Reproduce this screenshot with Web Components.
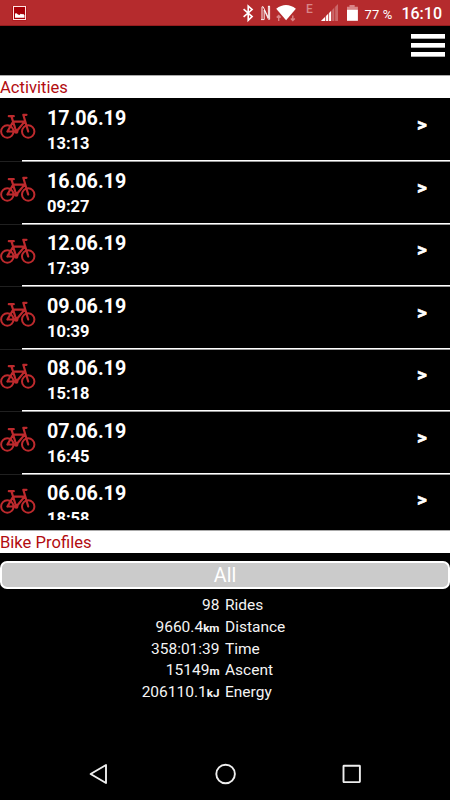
<!DOCTYPE html>
<html lang="en"><head><meta charset="utf-8"><title>Activities</title>
<style>html,body{margin:0;background:#000}body{width:450px;height:800px;overflow:hidden;font-family:Roboto,"Liberation Sans",sans-serif}</style></head>
<body><ride-app></ride-app>
<script>
const define=(name,render)=>customElements.define(name,class extends HTMLElement{
  connectedCallback(){
    if(this.shadowRoot)return;
    const t=document.createElement('template');
    t.innerHTML=render(this);
    this.attachShadow({mode:'open'}).append(t.content.cloneNode(true));
  }
});

define('status-bar',()=>`<style>
:host{display:flex;box-sizing:border-box;height:26px;background:#b52b2d;color:#fff;border-bottom:1px solid #961c1e;padding-right:8px;align-items:center}
svg{display:block;flex:none}
span{white-space:nowrap;line-height:26px;height:25px}
.pct{font-size:13px;letter-spacing:.15px;width:38px;padding:2px 0 0 1px;box-sizing:border-box;margin-right:1px}
.clock{font-size:16px;font-weight:500;padding-top:2px}
.net{font-size:12px;font-weight:500;color:#d98587;width:15px;line-height:18px}
</style>
<svg width="240" height="26" viewBox="0 0 240 26"><rect x="12.4" y="6" width="14" height="14.4" fill="#a80008"/><rect x="13.5" y="6.5" width="12" height="13" fill="none" stroke="#ffe2e2" stroke-width="1"/><path d="M15 17.8v-4.3l1.5-.3 1.5 1.3 1.5.5 1.2-1.2 1.3.4 1.3-.2 1.2 1.3v2.5z" fill="#fff"/></svg>
<svg width="66" height="26" viewBox="240 0 66 26"><path d="M243.6 9.2l8.5 7.4-3.9 3.7V6l3.9 3.6-8.5 7.3" fill="none" stroke="#fff" stroke-width="1.6"/>
<path d="M262 19.8V6.8h1.2l5.2 11V6M264.2 19.6V10l4.3 9.3h1.1V6.2M261 19.6h3.1M268 6.3h2" fill="none" stroke="#fff" stroke-width=".9"/>
<path d="M276.2 8.7Q286 1.2 295.9 8.7L286.1 20.2Z" fill="#fff"/><path d="M278.7 21v-5M276.7 17.6l2-2 2 2M292.8 15.5v5M290.8 18.5l2 2 2-2" fill="none" stroke="#d98587" stroke-width="1.4"/></svg>
<span class="net">E</span>
<svg width="43" height="26" viewBox="321 0 43 26"><path d="M321 21L338 4v17z" fill="#cb6769"/><path d="M321 21L331.3 10.7V21z" fill="#fff"/><path d="M325.6 15v6M328.6 12v9M331.7 9v12M334.7 7v14" stroke="#b52b2d" stroke-width=".8"/><path d="M347 10V6.8h2.5V5h5.2v1.8h3.2V10z" fill="#d98587"/><path d="M347 9.8h10.9v11H347z" fill="#fff"/></svg>
<span class="pct">77 %</span><span class="clock">16:10</span>`);

define('menu-bar',()=>`<style>:host{display:flex;box-sizing:border-box;height:49px;justify-content:flex-end;padding:8px 5px 0 0}
div{display:flex;flex-direction:column;gap:4px;width:34px}i{display:block;height:5px;background:#fff;box-sizing:border-box;border-bottom:1px solid #aaa}</style><div><i></i><i></i><i></i></div>`);

define('section-header',()=>`<style>:host{display:block;box-sizing:border-box;height:23px;background:#fff;border-top:1px solid #aaa;color:#b20c10;font-size:16.6px;line-height:23px;white-space:nowrap}</style><slot></slot>`);

define('bike-icon',()=>`<style>:host{display:block;width:36px;height:26px}svg{display:block}</style>
<svg width="36" height="26" viewBox="0 0 36 26" fill="none" stroke="#bd2a2d" stroke-width="2" stroke-linecap="round" stroke-linejoin="round"><circle cx="7.3" cy="18.5" r="6.2"/><circle cx="28.2" cy="18.5" r="6.2"/><path d="M7.4 18.5l5.8-9.9h11.4L16.4 18.5H7.4M8.8 3.2h5M11.5 3.6l4.7 14.9M28.2 18.5L23.3 1.8h3.2" stroke-width="2.2"/><circle cx="16.2" cy="18.5" r="1.3"/></svg>`);

define('activity-row',el=>`<style>
:host{display:grid;grid-template-columns:47px 1fr 34px;height:62.5px;color:#fff;position:relative;box-sizing:border-box;font-weight:700}
bike-icon{margin-top:15px}
.copy{padding-top:9px}.date{font-size:19.7px;line-height:23px}.time{font-size:16.5px;line-height:20px;margin-top:4.2px}
.go{font-size:19px;line-height:20px;padding-top:17px;margin-left:1px;-webkit-text-stroke:.6px #fff}
:host::after{content:"";position:absolute;left:22px;right:0;bottom:-1.5px;height:2px;background:linear-gradient(#fff 50%,#999 50%)}
:host::before{content:"";position:absolute;left:0;width:22px;bottom:-1.5px;height:1px;background:#202020}
</style><bike-icon></bike-icon><div class="copy"><div class="date">${el.getAttribute('date')}</div><div class="time">${el.getAttribute('time')}</div></div><div class="go">&gt;</div>`);

define('activity-list',()=>`<style>:host{display:block;height:422px;overflow:hidden;margin-bottom:10px}</style>
${[['17.06.19','13:13'],['16.06.19','09:27'],['12.06.19','17:39'],['09.06.19','10:39'],['08.06.19','15:18'],['07.06.19','16:45'],['06.06.19','18:58']].map(([d,t])=>`<activity-row date="${d}" time="${t}"></activity-row>`).join('')}`);

define('profile-button',()=>`<style>:host{display:block;box-sizing:border-box;height:28px;margin-top:7.5px;border:2px solid #fff;border-radius:7px;background:#cbcbcb;color:#fff;font-size:19.6px;line-height:26px;text-align:center}</style><slot></slot>`);

define('stat-row',el=>`<style>:host{display:grid;grid-template-columns:219.5px 1fr;gap:5.5px;height:21.9px;color:#f4f4f4;font-size:15.5px;line-height:22px;white-space:nowrap}
.v{text-align:right}b{font-size:11.7px}</style><div class="v">${el.getAttribute('value')}<b>${el.getAttribute('unit')||''}</b></div><div><slot></slot></div>`);

define('ride-stats',()=>`<style>:host{display:block;padding-top:5.3px;flex:1}</style>
<stat-row value="98">Rides</stat-row><stat-row value="9660.4" unit="km">Distance</stat-row><stat-row value="358:01:39">Time</stat-row><stat-row value="15149" unit="m">Ascent</stat-row><stat-row value="206110.1" unit="kJ">Energy</stat-row>`);

define('nav-bar',()=>`<style>:host{display:flex;height:52px;justify-content:space-between;align-items:center;padding:0 86px 0 87px}svg{display:block}</style>
${['<path d="M19 3v18L3.6 12z"/>','<circle cx="11.6" cy="12" r="9.3"/>','<rect x="3.5" y="3.7" width="16.4" height="16.4" rx=".5"/>'].map(s=>`<svg width="24" height="24" viewBox="0 0 24 24" fill="none" stroke="#eee" stroke-width="1.9" stroke-linejoin="round">${s}</svg>`).join('')}`);

define('ride-app',()=>`<style>:host{display:flex;flex-direction:column;width:450px;height:800px;background:#000;overflow:hidden}
:host>*{flex-shrink:0}</style>
<status-bar></status-bar><menu-bar></menu-bar><section-header>Activities</section-header><activity-list></activity-list>
<section-header>Bike Profiles</section-header><profile-button>All</profile-button><ride-stats></ride-stats><nav-bar></nav-bar>`);
</script></body></html>
